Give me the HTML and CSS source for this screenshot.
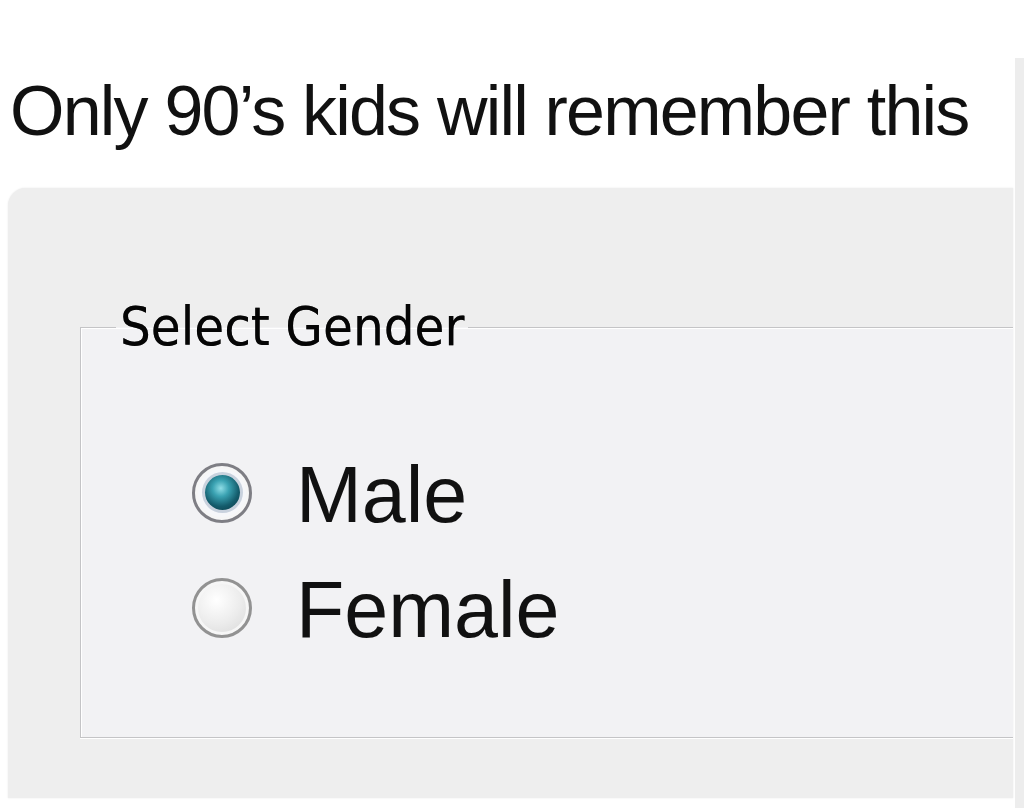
FILE: index.html
```html
<!DOCTYPE html>
<html lang="en">
<head>
<meta charset="utf-8">
<title>Only 90's kids will remember this</title>
<link rel="stylesheet" href="styles.css">
</head>
<body>
  <div class="main">
    <h1 class="title">Only 90’s kids will remember this</h1>
    <div class="panel">
      <fieldset class="group">
        <legend class="group-label">Select Gender</legend>
        <label class="option">
          <span class="radio checked"></span>
          <span class="option-text">Male</span>
        </label>
        <label class="option">
          <span class="radio"></span>
          <span class="option-text">Female</span>
        </label>
      </fieldset>
    </div>
  </div>
  <div class="strip"></div>
</body>
</html>
```

FILE: styles.css
```css
html, body {
  margin: 0;
  padding: 0;
}

body {
  background: #ffffff;
  display: flex;
  min-height: 808px;
  overflow: hidden;
}

.main {
  width: 1013px;
  flex: none;
  display: flex;
  flex-direction: column;
}

.strip {
  width: 9px;
  margin-left: 2px;
  margin-top: 58px;
  background: #ededed;
}

.title {
  margin: 71px 0 0 10px;
  font-family: "Liberation Sans", Arial, sans-serif;
  font-weight: normal;
  font-size: 70px;
  line-height: 80px;
  letter-spacing: -1.8px;
  color: #111111;
  white-space: nowrap;
}

.panel {
  margin: 37px 0 0 8px;
  height: 610px;
  background: #eeeeee;
  border-top-left-radius: 18px;
  box-shadow: 0 0 2px rgba(0, 0, 0, 0.10);
  padding: 109px 0 0 72px;
  box-sizing: border-box;
  overflow: hidden;
}

.group {
  margin: 0 -40px 0 0;
  padding: 80px 0 70px 0;
  border: 1px solid #c4c4c6;
  box-shadow: 0 1px 0 #ffffff, inset 1px 1px 0 #ffffff;
  background: #f2f2f4;
  display: flex;
  flex-direction: column;
}

.group-label {
  margin-left: 35px;
  padding: 0 4px;
  font-family: "DejaVu Sans Condensed", "DejaVu Sans", sans-serif;
  font-size: 54px;
  line-height: 60px;
  color: #050505;
  letter-spacing: 0;
  text-shadow: 0 0 0.6px rgba(0, 0, 0, 0.6);
}

.option {
  display: flex;
  align-items: center;
  height: 115px;
  padding-left: 111px;
}

.radio {
  width: 60px;
  height: 60px;
  box-sizing: border-box;
  border-radius: 50%;
  border: 3px solid #929292;
  background: radial-gradient(circle at 40% 35%, #ffffff 0%, #ececec 50%, #d4d4d4 100%);
  box-shadow: inset 0 0 0 3px #f6f6f6;
  display: flex;
  align-items: center;
  justify-content: center;
  margin-bottom: 4px;
  flex: none;
}

.radio.checked {
  border-color: #7e7e84;
  background: #f6f7fa;
}

.radio.checked::after {
  content: "";
  width: 35px;
  height: 35px;
  border-radius: 50%;
  background: radial-gradient(circle at 45% 38%, #8fdde6 0%, #3aa2b2 28%, #145c6c 62%, #0b3440 100%);
  box-shadow: 0 0 0 3px #c9d2de;
}

.option-text {
  margin-left: 44px;
  font-family: "Liberation Sans", Arial, sans-serif;
  font-size: 79px;
  line-height: 86px;
  color: #111111;
}
```
